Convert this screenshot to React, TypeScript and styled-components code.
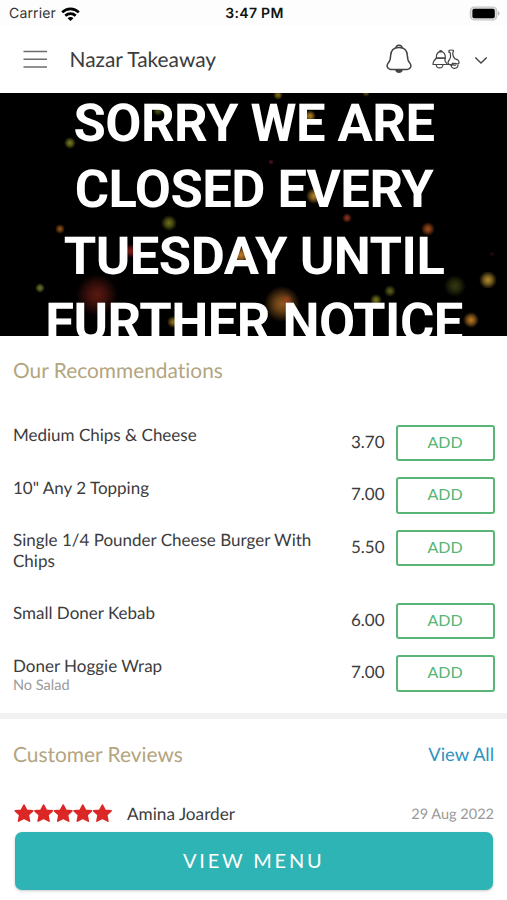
import React from 'react';
import styled, { createGlobalStyle } from 'styled-components';

const GlobalStyle = createGlobalStyle`
  * { box-sizing: border-box; }
  body { margin: 0; background: #fff; }
  button { font: inherit; cursor: pointer; }
`;

const Screen = styled.div`
  position: relative;
  display: flex;
  flex-direction: column;
  width: 507px;
  height: 900px;
  overflow: hidden;
  background: #fff;
  color: #3c3c3e;
  font-family: Lato, 'Liberation Sans', sans-serif;
  font-variant-ligatures: none;
  text-rendering: geometricPrecision;
`;

const StatusBar = styled.div`
  display: grid;
  grid-template-columns: 1fr auto 1fr;
  align-items: center;
  flex: none;
  height: 26px;
  padding: 2px 7px 0 9px;
  background: #fdfdfd;
  color: #111;
  font: 400 14px/24px Inter, sans-serif;
`;

const Carrier = styled.div`
  display: flex;
  align-items: center;
  gap: 5px;
  letter-spacing: 0.15px;
  color: #333;
`;

const Clock = styled.div`
  font-weight: 600;
  letter-spacing: 0.3px;
`;

const BatterySlot = styled.div`
  display: flex;
  justify-content: flex-end;
`;

const Header = styled.header`
  display: flex;
  align-items: center;
  flex: none;
  height: 66.5px;
  padding: 0 13px 1px 23px;
`;

const StoreName = styled.h1`
  flex: 1;
  margin: 1.5px 0 0 21.5px;
  font-size: 20.9px;
  font-weight: 400;
  line-height: 26px;
`;

const IconButton = styled.button`
  display: flex;
  padding: 0;
  border: 0;
  background: none;
  color: #444;
`;

const Actions = styled.div`
  display: grid;
  grid-template-columns: 26px 28px 14px;
  align-items: center;
  column-gap: 20px;

  & > :nth-child(2) {
    margin-top: 1.5px;
  }

  & > :nth-child(3) {
    margin: 4px 0 0 -6px;
  }
`;

const Banner = styled.section`
  position: relative;
  flex: none;
  height: 243px;
  overflow: hidden;
  background: #000;
`;

const Sparks = styled.svg`
  position: absolute;
  inset: 0;
`;

const BannerText = styled.p`
  position: relative;
  margin: -3px 0 0;
  color: #fff;
  font: 700 52.5px/66.6px Roboto, sans-serif;
  text-align: center;
  white-space: nowrap;
`;

const BannerLine = styled.span`
  display: block;
  letter-spacing: -0.5px;
  text-indent: 1px;
`;

const SectionHead = styled.div`
  display: flex;
  align-items: center;
  justify-content: space-between;
  height: 28px;
`;

const SectionTitle = styled.h2`
  margin: 0;
  color: #b3a580;
  font-size: 20.9px;
  font-weight: 400;
  line-height: 28px;
`;

const Recommendations = styled.section`
  flex: none;
  height: 377.5px;
  padding: 21.5px 12.5px 0 13px;
`;

const ItemList = styled.ul`
  margin: 39.5px 0 0;
  padding: 0;
  list-style: none;
`;

const Item = styled.li`
  display: grid;
  grid-template-columns: 1fr auto 99px;
  align-items: start;
  column-gap: 11px;
  padding-bottom: 32px;
`;

const ItemName = styled.div`
  padding-top: 0.6px;
  margin-bottom: -0.6px;
  padding-right: 24px;
  font-size: 17px;
  line-height: 20.5px;
`;

const ItemNote = styled.div`
  margin-bottom: -18px;
  color: #9a9a9a;
  font-size: 14.5px;
  line-height: 19px;
`;

const Price = styled.div`
  margin-bottom: -20px;
  font-size: 17px;
  line-height: 34px;
`;

const AddButton = styled.button`
  height: 36.5px;
  margin-bottom: -20px;
  padding: 0 0 2px;
  border: 2px solid #58b576;
  border-radius: 3px;
  background: #fff;
  color: #58b576;
  font-size: 16px;
  line-height: 30px;
`;

const Reviews = styled.section`
  flex: 1;
  padding: 21.5px 13px 0;
  border-top: 6px solid #f1f1f1;
`;

const ViewAll = styled.a`
  margin-top: -2px;
  color: #2f93bd;
  font-size: 18.4px;
  text-decoration: none;
`;

const Review = styled.div`
  display: flex;
  align-items: center;
  margin-top: 33px;
  height: 24px;
`;

const Reviewer = styled.div`
  flex: 1;
  margin-left: 14px;
  font-size: 17.2px;
`;

const ReviewDate = styled.time`
  margin-top: 1px;
  color: #999;
  font-size: 14.5px;
`;

const MenuButton = styled.button`
  position: absolute;
  right: 14.5px;
  bottom: 10px;
  left: 15px;
  height: 58.5px;
  padding: 0 0 2px;
  border: 0;
  border-radius: 7px;
  background: #2fb4b5;
  box-shadow: 0 1px 3px rgba(0, 0, 0, 0.22);
  color: #fff;
  font-size: 20px;
  letter-spacing: 2.8px;
`;

const sparks: [number, number, number, string, number][] = [
  [70, 50, 6, '#9a9c2c', 0.8],
  [158, 18, 5, '#8a8c20', 0.6],
  [60, 136, 5, '#b96a20', 0.8],
  [169, 130, 8, '#878d20', 0.8],
  [40, 195, 5, '#91963a', 0.8],
  [97, 202, 21, '#8c251b', 0.65],
  [131, 158, 7, '#c02820', 0.7],
  [241, 162, 9, '#cf8427', 0.95],
  [173, 229, 6, '#b59220', 0.8],
  [278, 2, 5, '#a58b22', 0.8],
  [366, 0, 4, '#80701e', 0.7],
  [310, 23, 6, '#c99326', 0.9],
  [271, 69, 3, '#882040', 0.6],
  [314, 103, 8, '#c7912e', 0.9],
  [347, 125, 5, '#b84022', 0.8],
  [428, 136, 7, '#c35a21', 0.85],
  [488, 187, 9, '#c79a33', 0.9],
  [455, 193, 11, '#59601c', 0.6],
  [390, 198, 6, '#737821', 0.8],
  [376, 207, 6, '#969820', 0.8],
  [282, 211, 18, '#b57028', 0.8],
  [287, 207, 6, '#c04020', 0.5],
  [471, 227, 8, '#ca8125', 0.95],
  [492, 161, 3, '#4c1d2c', 0.4],
];

const BannerSparks = () => (
  <Sparks width="507" height="243" aria-hidden="true">
    <defs>
      {sparks.map(([, , , color], i) => (
        <radialGradient id={`spark${i}`} key={i}>
          <stop offset="0" stopColor={color} />
          <stop offset="0.4" stopColor={color} stopOpacity="0.7" />
          <stop offset="1" stopColor={color} stopOpacity="0" />
        </radialGradient>
      ))}
    </defs>
    {sparks.map(([x, y, r, , o], i) => (
      <circle key={i} cx={x} cy={y} r={r} fill={`url(#spark${i})`} opacity={o} />
    ))}
  </Sparks>
);

const WifiIcon = () => (
  <svg width="19" height="15" viewBox="0 0 19 15" fill="none" stroke="#000" strokeWidth="2.7">
    <path d="M1.2 5.4C6 .6 13 .6 17.8 5.4" />
    <path d="M4.3 8.7C7.3 5.9 11.7 5.9 14.7 8.7" />
    <path d="M6.6 11.2C8.2 9.6 10.8 9.6 12.4 11.2L9.5 14Z" fill="#000" stroke="none" />
  </svg>
);

const BatteryIcon = () => (
  <svg width="31" height="16" viewBox="0 0 31 16">
    <rect x="1.4" y="1" width="26.4" height="13" rx="4" fill="#ddd" stroke="#c4c4c4" strokeWidth="1.2" />
    <rect x="3.4" y="2.8" width="22.4" height="9.4" rx="2" fill="#000" />
    <path d="M29 5.3c2 .7 2 3.7 0 4.4z" fill="#b5b5b5" />
  </svg>
);

const MenuIcon = () => (
  <svg width="25" height="20" viewBox="0 0 25 20" stroke="#6c6c6c" strokeWidth="1.5">
    <path d="M.5 2.5h23.5M.5 10.2h23.5M.5 17.9h23.5" />
  </svg>
);

const BellIcon = () => (
  <svg width="26" height="30" viewBox="0 0 26 30" fill="none" stroke="currentColor" strokeWidth="1.5">
    <path d="M10 4.1C10 .2 16 .2 16 4.1" />
    <path d="M13 3.6c-5.7 0-8.2 3.7-8.4 8.2-.1 3.8-.7 5.5-2.2 7-2.4 2.6-1.200 6.400 2.200 6.600h16.800c3.400-.2 4.600-4 2.200-6.600-1.500-1.500-2.100-3.200-2.200-7-.2-4.500-2.700-8.200-8.400-8.200Z" />
    <path d="M9.2 26h7.6c-.4 4-7.2 4-7.6 0Z" fill="currentColor" stroke="none" />
  </svg>
);

const ScooterIcon = () => (
  <svg width="28" height="21" viewBox="0 0 28 21" fill="none" stroke="currentColor" strokeWidth="1.2" strokeLinejoin="round">
    <path d="M4.3 9.2C4.2 4.8 6 2.8 8.8 2.7c2.9 0 4.8 2.3 4.6 6.5zM7.3 2.8c.3-1.6 2.7-1.6 3 0" />
    <path d="M4.3 9.2C2.2 11 1 12.9 1 15.5h18.6l1.8-1.8M4 9.2h9.2c-.5 1.9-.3 3.4 1 4.4l1.3 1.9" />
    <path d="M4.2 15.7c.4 4.2 6.4 4.2 6.8 0" />
    <path d="M17 3.4V1.6c1.2-.9 4-.8 4.6.2l-.8 2c-.3 2 .5 4 2.2 6 2.7.3 4.6 2.3 3.9 4.4l-1.7.8c-2-.9-4.2-.3-5.4 1.4l-2.6-.9c-1.8-1.2-1.3-3.2.4-5C19 8.5 18.7 6 18 3.4z" />
    <path d="M19.1 16.1c.1 4.5 6.9 4.3 7-.7M21.2 16.2h3" />
  </svg>
);

const ChevronIcon = () => (
  <svg width="14" height="9" viewBox="0 0 14 9" fill="none" stroke="currentColor" strokeWidth="1.4">
    <path d="M1.3 1.4 7 7.1l5.7-5.7" />
  </svg>
);

const StarRow = () => (
  <svg width="100" height="20" viewBox="0 0 100 20" fill="#dc2727" stroke="#dc2727" strokeWidth="1.6" strokeLinejoin="round" role="img" aria-label="5 stars">
    {[0, 1, 2, 3, 4].map((i) => (
      <path
        key={i}
        transform={`translate(${11 + i * 19.6} 9.5)`}
        d="M0-8.5 2.7-3.3 8.7-2.6 4.3 1.5 5.5 7.6 0 4.7-5.5 7.6-4.3 1.5-8.7-2.6-2.7-3.3Z"
      />
    ))}
  </svg>
);

const items = [
  { name: 'Medium Chips & Cheese', price: '3.70' },
  { name: '10" Any 2 Topping', price: '7.00' },
  { name: 'Single 1/4 Pounder Cheese Burger With Chips', price: '5.50' },
  { name: 'Small Doner Kebab', price: '6.00' },
  { name: 'Doner Hoggie Wrap', price: '7.00', note: 'No Salad' },
];

const notice = ['SORRY WE ARE', 'CLOSED EVERY', 'TUESDAY UNTIL', 'FURTHER NOTICE'];

export default function App() {
  return (
    <>
      <GlobalStyle />
      <Screen>
        <StatusBar>
          <Carrier>
            Carrier <WifiIcon />
          </Carrier>
          <Clock>3:47 PM</Clock>
          <BatterySlot>
            <BatteryIcon />
          </BatterySlot>
        </StatusBar>
        <Header>
          <IconButton aria-label="Menu">
            <MenuIcon />
          </IconButton>
          <StoreName>Nazar Takeaway</StoreName>
          <Actions>
            <IconButton aria-label="Notifications">
              <BellIcon />
            </IconButton>
            <IconButton aria-label="Delivery">
              <ScooterIcon />
            </IconButton>
            <IconButton aria-label="More">
              <ChevronIcon />
            </IconButton>
          </Actions>
        </Header>
        <Banner>
          <BannerSparks />
          <BannerText>
            {notice.map((line) => (
              <BannerLine key={line}>{line}</BannerLine>
            ))}
          </BannerText>
        </Banner>
        <Recommendations>
          <SectionHead>
            <SectionTitle>Our Recommendations</SectionTitle>
          </SectionHead>
          <ItemList>
            {items.map((item) => (
              <Item key={item.name}>
                <ItemName>
                  {item.name}
                  {item.note && <ItemNote>{item.note}</ItemNote>}
                </ItemName>
                <Price>{item.price}</Price>
                <AddButton>ADD</AddButton>
              </Item>
            ))}
          </ItemList>
        </Recommendations>
        <Reviews>
          <SectionHead>
            <SectionTitle>Customer Reviews</SectionTitle>
            <ViewAll>View All</ViewAll>
          </SectionHead>
          <Review>
            <StarRow />
            <Reviewer>Amina Joarder</Reviewer>
            <ReviewDate>29 Aug 2022</ReviewDate>
          </Review>
        </Reviews>
        <MenuButton>VIEW MENU</MenuButton>
      </Screen>
    </>
  );
}
